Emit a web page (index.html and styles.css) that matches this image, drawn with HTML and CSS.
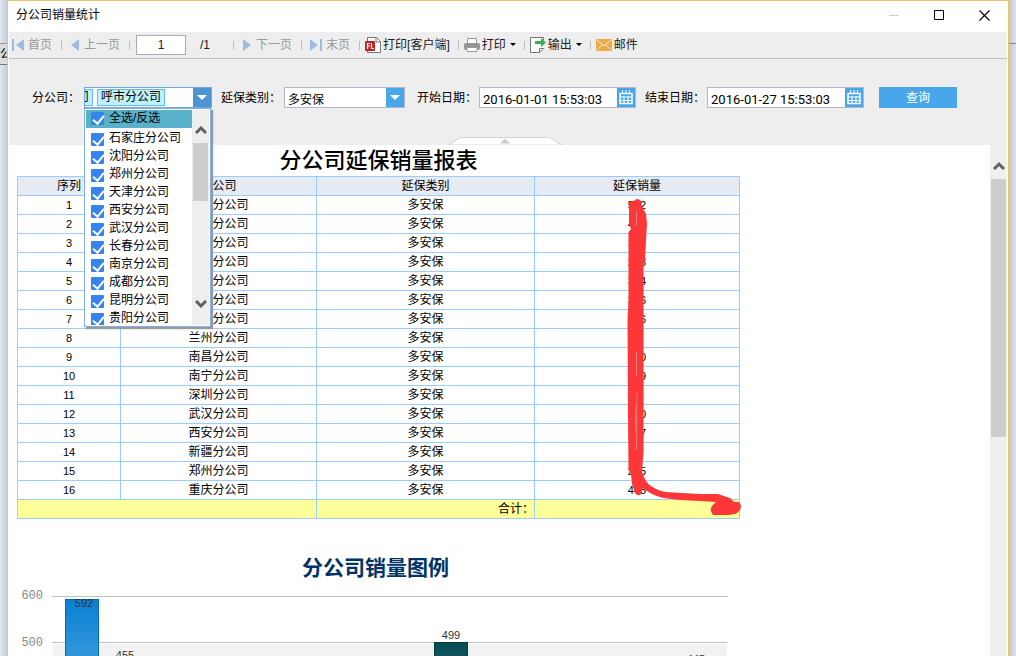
FILE: index.html
```
<!DOCTYPE html>
<html lang="zh-CN">

<head>
    <meta charset="UTF-8">
    <meta name="viewport" content="width=device-width, initial-scale=1.0">
    <title>分公司销量统计</title>
    <link rel="stylesheet" href="styles.css">
</head>

<body>
    <div class="desktop">
        <div class="behind left"><span>公</span></div>

        <div class="window">
            <!-- 标题栏 -->
            <header class="titlebar">
                <h1>分公司销量统计</h1>
                <div class="win-buttons">
                    <button type="button" aria-label="最小化"><svg width="11" height="11"><path d="M0 5.500h10" stroke="#ccc" /></svg></button>
                    <button type="button" aria-label="最大化"><svg width="11" height="11"><path d="M.5.5h9v9h-9z" fill="none" stroke="#000" /></svg></button>
                    <button type="button" aria-label="关闭"><svg width="11" height="11"><path d="M.5.5l10 10M10.500.5l-10 10" stroke="#000" stroke-width="1.200" /></svg></button>
                </div>
            </header>

            <!-- 工具栏 -->
            <nav class="toolbar">
                <button type="button" class="nav first" disabled><svg width="12" height="12"><path d="M0 0h2v12H0zM12 0v12L4 6z" fill="#9dbde0" /></svg>首页</button>
                <button type="button" class="nav prev" disabled><svg width="8" height="12"><path d="M8 0v12L0 6z" fill="#9dbde0" /></svg>上一页</button>
                <div class="pager">
                    <input type="text" value="1" aria-label="页码">
                    <span>/1</span>
                </div>
                <button type="button" class="nav prev" disabled><svg width="8" height="12"><path d="M0 0v12l8-6z" fill="#9dbde0" /></svg>下一页</button>
                <button type="button" class="nav" disabled><svg width="12" height="12"><path d="M10 0h2v12h-2zM0 0v12l8-6z" fill="#9dbde0" /></svg>末页</button>
                <button type="button" class="tool">
                    <svg width="16" height="16"><path d="M2.500.5h9l4 4v11h-13z" fill="#fff" stroke="#777" /><path d="M11 .5v4.500h4.500" fill="none" stroke="#777" /><rect y="4" width="10" height="10" rx="1" fill="#cc1f24" /><path d="M2.500 12V6.500H5M2.500 9H5M6.500 6v5.500H9" fill="none" stroke="#fff" stroke-width="1.200" /></svg>打印[客户端]
                </button>
                <button type="button" class="tool">
                    <svg width="16" height="16"><path d="M3.500 7V1.500h9V7" fill="#fff" stroke="#999" /><rect y="6" width="16" height="7" rx="2" fill="#959595" /><path d="M3 10.500h10v4H3z" fill="#fff" stroke="#999" /></svg>打印<svg class="caret" width="6" height="4"><path d="M0 0h6L3 3z" /></svg>
                </button>
                <button type="button" class="tool">
                    <svg width="16" height="16"><path d="M13.500 3V.5H.5v15h9l4-4H9.500v4" fill="#fff" stroke="#777" /><path d="M5 4h6V1l5 4.500-5 4.500V7H5z" fill="#37ad55" /></svg>输出<svg class="caret" width="6" height="4"><path d="M0 0h6L3 3z" /></svg>
                </button>
                <button type="button" class="tool mail">
                    <svg width="16" height="16"><rect y="2" width="16" height="12" rx="1" fill="#edaa48" /><path d="M1 3l7 6 7-6M1 13l5-5M15 13l-5-5" fill="none" stroke="#fff3dc" /></svg>邮件
                </button>
            </nav>

            <!-- 查询条件 -->
            <form class="filters">
                <div class="field branch">
                    <label for="branch">分公司：</label>
                    <div class="combo">
                        <div class="tags"><span>司</span><span>呼市分公司</span></div>
                        <button type="button" id="branch" class="arrow dark"><svg width="10" height="5"><path d="M0 0h10L5 5z" fill="#fff" /></svg></button>
                        <div class="dropdown">
                            <div class="options">
                                <label class="all"><input type="checkbox" checked>全选/反选</label>
                                <label><input type="checkbox" checked>石家庄分公司</label>
                                <label><input type="checkbox" checked>沈阳分公司</label>
                                <label><input type="checkbox" checked>郑州分公司</label>
                                <label><input type="checkbox" checked>天津分公司</label>
                                <label><input type="checkbox" checked>西安分公司</label>
                                <label><input type="checkbox" checked>武汉分公司</label>
                                <label><input type="checkbox" checked>长春分公司</label>
                                <label><input type="checkbox" checked>南京分公司</label>
                                <label><input type="checkbox" checked>成都分公司</label>
                                <label><input type="checkbox" checked>昆明分公司</label>
                                <label><input type="checkbox" checked>贵阳分公司</label>
                            </div>
                            <div class="list-scroll">
                                <svg width="12" height="8"><path d="M1 7l5-5 5 5" /></svg>
                                <div class="thumb"></div>
                                <svg width="12" height="8"><path d="M1 1l5 5 5-5" /></svg>
                            </div>
                        </div>
                    </div>
                </div>
                <div class="field type">
                    <label for="type">延保类别：</label>
                    <div class="box">
                        <select id="type">
                            <option selected>多安保</option>
                        </select>
                        <span class="arrow"><svg width="10" height="5"><path d="M0 0h10L5 5z" fill="#fff" /></svg></span>
                    </div>
                </div>
                <div class="field">
                    <label for="start">开始日期：</label>
                    <div class="box date">
                        <input type="text" id="start" value="2016-01-01 15:53:03">
                        <button type="button" class="arrow" aria-label="选择开始日期"><svg width="14" height="15"><path d="M1 3.500h12v10H1z" fill="none" stroke="#fff" stroke-width="1.500" /><path d="M3.500 0v4M7 0v4M10.500 0v4M1 7h12M1 10.500h12M5 6v8M9 6v8" stroke="#fff" /></svg></button>
                    </div>
                </div>
                <div class="field">
                    <label for="end">结束日期：</label>
                    <div class="box date">
                        <input type="text" id="end" value="2016-01-27 15:53:03">
                        <button type="button" class="arrow" aria-label="选择结束日期"><svg width="14" height="15"><path d="M1 3.500h12v10H1z" fill="none" stroke="#fff" stroke-width="1.500" /><path d="M3.500 0v4M7 0v4M10.500 0v4M1 7h12M1 10.500h12M5 6v8M9 6v8" stroke="#fff" /></svg></button>
                    </div>
                </div>
                <button type="submit" class="query">查询</button>
                <svg class="handle" width="114" height="8"><path d="M0 8L11 1.500Q12 .5 14 .5h86q2 0 3 1L114 8z" fill="#fff" stroke="#d4d4d4" /><path d="M52 6.500h10L57 1.500z" fill="#ccc" /></svg>
            </form>

            <div class="content">
                <!-- 报表 -->
                <main class="report">
                    <h2>分公司延保销量报表</h2>
                    <div class="table-wrap">
                        <table>
                            <colgroup>
                                <col class="c1">
                                <col class="c2">
                                <col class="c3">
                                <col class="c4">
                            </colgroup>
                            <thead>
                                <tr><th>序列</th><th>分公司</th><th>延保类别</th><th>延保销量</th></tr>
                            </thead>
                            <tbody>
                                <tr><td>1</td><td>长春分公司</td><td>多安保</td><td>592</td></tr>
                                <tr><td>2</td><td>成都分公司</td><td>多安保</td><td>455</td></tr>
                                <tr><td>3</td><td>贵阳分公司</td><td>多安保</td><td>311</td></tr>
                                <tr><td>4</td><td>呼市分公司</td><td>多安保</td><td>283</td></tr>
                                <tr><td>5</td><td>济南分公司</td><td>多安保</td><td>314</td></tr>
                                <tr><td>6</td><td>昆明分公司</td><td>多安保</td><td>316</td></tr>
                                <tr><td>7</td><td>南京分公司</td><td>多安保</td><td>366</td></tr>
                                <tr><td>8</td><td>兰州分公司</td><td>多安保</td><td>87</td></tr>
                                <tr><td>9</td><td>南昌分公司</td><td>多安保</td><td>310</td></tr>
                                <tr><td>10</td><td>南宁分公司</td><td>多安保</td><td>499</td></tr>
                                <tr><td>11</td><td>深圳分公司</td><td>多安保</td><td>71</td></tr>
                                <tr><td>12</td><td>武汉分公司</td><td>多安保</td><td>320</td></tr>
                                <tr><td>13</td><td>西安分公司</td><td>多安保</td><td>317</td></tr>
                                <tr><td>14</td><td>新疆分公司</td><td>多安保</td><td>91</td></tr>
                                <tr><td>15</td><td>郑州分公司</td><td>多安保</td><td>215</td></tr>
                                <tr><td>16</td><td>重庆分公司</td><td>多安保</td><td>445</td></tr>
                            </tbody>
                            <tfoot>
                                <tr><td colspan="2"></td><td class="sum">合计：</td><td></td></tr>
                            </tfoot>
                        </table>
                        <!-- 红色涂抹 -->
                        <svg class="scrawl" width="125" height="330" viewBox="620 195 125 330">
                            <path d="M629 203Q631 200 634 201Q637 197 641 201L642 206L646 214L647 224L646 240L645 260L643.500 264V452L642 472Q645 482 651 486Q658 491 666 492L682 493L700 494L718 494L730 498L734 502Q741 501 741 507Q740 512 735 514L728 515L713 515Q709 510 712 506L716 502L700 501L680 500L663 498Q651 495 643 488L641 494Q638 497 635 493L632 484L631 474L628.500 470L628 412L627.500 320L628.500 300V232L631 229L629 224Z" />
                            <path class="gap" d="M636.500 211v15M636.500 352v24M637 393l-.5 57M635.500 405v26" />
                        </svg>
                    </div>

                    <!-- 图例 -->
                    <h3>分公司销量图例</h3>
                    <svg class="chart" width="723" height="76" viewBox="17 580 723 76">
                        <defs>
                            <linearGradient id="blue" x1="0" y1="0" x2="0" y2="1">
                                <stop offset="0" stop-color="#0a80d2" />
                                <stop offset="1" stop-color="#3597dc" />
                            </linearGradient>
                            <linearGradient id="teal" x1="0" y1="0" x2="0" y2="1">
                                <stop offset="0" stop-color="#064a50" />
                                <stop offset="1" stop-color="#105c62" />
                            </linearGradient>
                        </defs>
                        <rect x="53" y="644" width="674" height="12" fill="#f2f2f2" />
                        <path d="M52 596.500h676M52 642.500h676" stroke="#bfbfbf" />
                        <rect x="65.500" y="599.500" width="33" height="60" fill="url(#blue)" stroke="#006bb5" />
                        <rect x="434.500" y="642.500" width="33" height="20" fill="url(#teal)" stroke="#033c41" />
                        <text class="axis" x="43" y="599">600</text>
                        <text class="axis" x="43" y="646">500</text>
                        <text class="value" x="84" y="607">592</text>
                        <text class="value" x="125" y="659">455</text>
                        <text class="value" x="451" y="639">499</text>
                        <text class="value" x="696" y="663">445</text>
                    </svg>
                </main>
                <div class="page-scroll">
                    <svg width="12" height="9"><path d="M1 8l5-5 5 5" /></svg>
                    <div class="thumb"></div>
                </div>
            </div>
        </div>

        <div class="behind right"></div>
    </div>
</body>

</html>
```

FILE: styles.css
```
* {
    box-sizing: border-box;
}

body {
    margin: 0;
    overflow: hidden;
    font-family: "Liberation Sans", "Noto Sans CJK SC", sans-serif;
    font-size: 12px;
    line-height: 18px;
    color: #000;
}

h1,
h2,
h3 {
    margin: 0;
    font-weight: normal;
}

button,
input,
select {
    margin: 0;
    padding: 0;
    border: none;
    border-radius: 0;
    background: none;
    font: inherit;
    color: inherit;
}

svg {
    display: block;
    flex: none;
}

.desktop {
    display: flex;
    height: 100vh;
}

.behind {
    flex: none;
    width: 7px;
    overflow: hidden;
    background: linear-gradient(to right, #e0e8f1, #c7ced9);
}

.behind.left {
    padding-top: 43px;
}

.behind.left span {
    display: block;
    height: 22px;
    border-top: 1px solid #999;
    border-bottom: 1px solid #777;
    background: #dcdcdf;
    line-height: 20px;
}

.behind.right {
    padding-top: 43px;
    background: linear-gradient(to left, #dce3ed, #c0c6d2);
}

.behind.right::before {
    content: "";
    display: block;
    border-top: 1px solid #888;
}

.window {
    display: flex;
    flex: 1;
    flex-direction: column;
    min-width: 0;
    padding: 0 1px;
    border: 1px solid #f0c369;
    border-bottom: none;
    background: #fff;
}

/* title bar */
.titlebar {
    display: flex;
    flex: none;
    align-items: center;
    justify-content: space-between;
    height: 31px;
    padding: 0 17px 3px 7px;
}

.titlebar h1 {
    font-size: 12px;
}

.win-buttons {
    display: flex;
    gap: 34px;
}

/* toolbar */
.toolbar {
    display: flex;
    flex: none;
    align-items: center;
    height: 27px;
    padding-left: 3px;
    border-bottom: 1px solid #bfbfbf;
    background: #eee;
    color: #222;
    white-space: nowrap;
}

.toolbar button {
    display: flex;
    align-items: center;
    padding: 0 9px;
}

.toolbar button + button,
.pager + button {
    background: linear-gradient(#bbb, #bbb) 0 5px / 1px 9px no-repeat;
}

.toolbar .nav {
    gap: 4px;
    color: #999;
}

.toolbar .first {
    padding-left: 0;
}

.toolbar .prev {
    gap: 5px;
    padding-left: 10px;
}

.toolbar .tool {
    gap: 2px;
    padding: 0 8px 0 6px;
}

.toolbar .caret {
    margin-left: 2px;
}

.pager {
    display: flex;
    align-items: center;
    gap: 14px;
    padding: 0 23px 0 7px;
    background: linear-gradient(#bbb, #bbb) 0 6px / 1px 9px no-repeat;
}

.pager input {
    width: 50px;
    height: 20px;
    border: 1px solid #aab;
    background: #fff;
    text-align: center;
}

/* filters */
.filters {
    position: relative;
    display: flex;
    flex: none;
    align-items: flex-start;
    gap: 9px;
    height: 86px;
    padding: 28px 0 0 23px;
    background: #eee;
    white-space: nowrap;
}

.field {
    display: flex;
    align-items: center;
    gap: 2px;
}

.field.branch {
    gap: 4px;
}

.field.type {
    gap: 3px;
    margin-right: 3px;
}

.combo,
.box {
    position: relative;
    display: flex;
    width: 121px;
    height: 21px;
    border: 1px solid #b5b5c9;
    background: #fff;
}

.combo {
    width: 128px;
    border-color: #6fa9e0;
}

.box.date {
    width: 157px;
}

.arrow {
    display: flex;
    flex: none;
    align-items: center;
    justify-content: center;
    width: 18px;
    background: #48a7ea;
}

span.arrow {
    pointer-events: none;
}

.arrow.dark {
    background: #4d94d2;
}

.box select {
    flex: 1;
    min-width: 0;
    padding: 3px 0 0 3px;
    appearance: none;
}

.box input {
    flex: 1;
    min-width: 0;
    padding: 5px 0 0 3px;
    font-family: Roboto, sans-serif;
    font-size: 13px;
}

.tags {
    display: flex;
    flex: 1;
    align-items: center;
    justify-content: flex-end;
    gap: 4px;
    min-width: 0;
    padding-right: 28px;
    overflow: hidden;
}

.tags span {
    flex: none;
    height: 17px;
    padding: 0 3px;
    border: 1px solid #68b9f2;
    background: #bdf1fb;
    line-height: 15px;
}

.query {
    width: 78px;
    height: 21px;
    margin-left: 6px;
    background: #48a7ea;
    color: #fff;
}

.handle {
    position: absolute;
    bottom: 0;
    left: 50%;
    margin-left: -60px;
}

.dropdown {
    position: absolute;
    z-index: 2;
    top: 20px;
    left: -1px;
    display: flex;
    width: 127px;
    height: 219px;
    padding: 1px;
    border: 1px solid #80b0ea;
    background: #fff;
    box-shadow: 2px 2px 1px #999;
}

.options {
    flex: 1;
    overflow: hidden;
}

.options label {
    display: flex;
    align-items: center;
    gap: 5px;
    height: 18px;
    padding: 0 0 2px 5px;
    line-height: 16px;
}

.options .all {
    margin-bottom: 2px;
    background: #58b1c8;
}

.options input {
    flex: none;
    width: 13px;
    height: 13px;
    border-radius: 1px;
    background: #3684f0;
    appearance: none;
}

.options label:not(.all) input {
    margin-top: 3px;
}

.options input:checked::after {
    content: "";
    display: block;
    width: 5px;
    height: 9px;
    margin-left: 4px;
    border: solid #fff;
    border-width: 0 2px 2px 0;
    line-height: 9px;
    transform: translateY(1px) rotate(40deg);
}

.options input:checked {
    display: flex;
}

.list-scroll {
    display: flex;
    flex-direction: column;
    align-items: center;
    width: 17px;
    padding: 16px 0 17px;
    background: #eee;
}

.list-scroll .thumb {
    width: 15px;
    height: 58px;
    margin: 9px 0 auto;
}

.thumb {
    background: #cdcdcd;
}

.list-scroll path,
.page-scroll path {
    fill: none;
    stroke: #606060;
    stroke-width: 3;
}

/* report */
.content {
    display: flex;
    flex: 1;
    min-height: 0;
}

.report {
    flex: 1;
    padding-left: 8px;
    overflow: hidden;
}

.report h2,
.report h3,
.table-wrap {
    width: 723px;
    text-align: center;
}

.report h2 {
    font-size: 22px;
    font-weight: 500;
    line-height: 31px;
}

.report h3 {
    padding: 37px 6px 0 0;
    font-size: 21px;
    font-weight: bold;
    line-height: 24px;
    color: #036;
}

.table-wrap {
    position: relative;
}

table {
    width: 100%;
    border-collapse: collapse;
    table-layout: fixed;
}

.c1 {
    width: 103px;
}

.c2 {
    width: 196px;
}

.c3 {
    width: 218px;
}

th,
td {
    height: 19px;
    padding: 0;
    border: 1px solid #9cf;
    font-weight: normal;
    line-height: 18px;
}

th {
    background: #e6eaf3;
}

td:first-child,
td:last-child {
    font-size: 11px;
}

tfoot td {
    background: #ff9;
}

.sum {
    text-align: right;
}

.scrawl {
    position: absolute;
    top: 19px;
    left: 603px;
    fill: #fd3737;
}

.scrawl .gap {
    fill: none;
    stroke: #d98080;
}

.axis {
    font-family: "Liberation Mono", monospace;
    font-size: 12px;
    text-anchor: end;
    fill: #888;
}

.value {
    font-size: 11px;
    text-anchor: middle;
    fill: #333;
}

.page-scroll {
    display: flex;
    flex: none;
    flex-direction: column;
    align-items: center;
    gap: 9px;
    width: 17px;
    padding-top: 16px;
    background: #efefef;
}

.page-scroll .thumb {
    width: 15px;
    height: 258px;
}
```
